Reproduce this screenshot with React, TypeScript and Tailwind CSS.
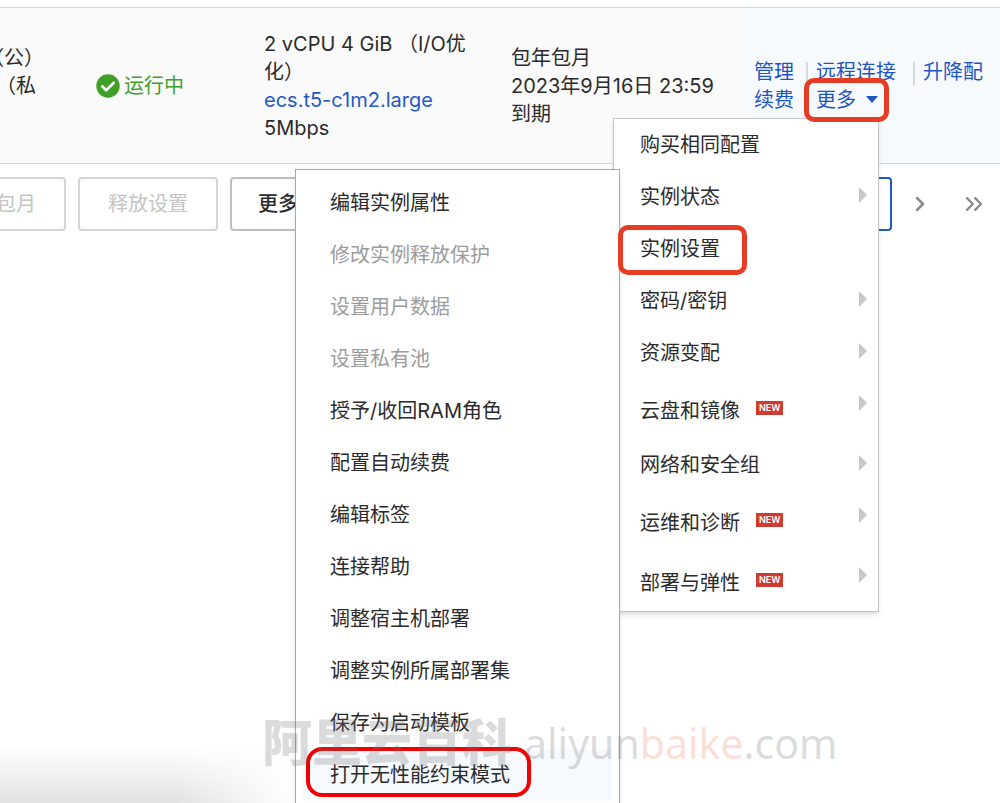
import { ChevronRight, ChevronsRight } from "lucide-react";

type MenuItem = {
   label: string;
   hasChildren?: boolean;
   isNew?: boolean;
   disabled?: boolean;
   active?: boolean;
};

const moreItems: MenuItem[] = [
   { label: "购买相同配置" },
   { label: "实例状态", hasChildren: true },
   { label: "实例设置", active: true },
   { label: "密码/密钥", hasChildren: true },
   { label: "资源变配", hasChildren: true },
   { label: "云盘和镜像", hasChildren: true, isNew: true },
   { label: "网络和安全组", hasChildren: true },
   { label: "运维和诊断", hasChildren: true, isNew: true },
   { label: "部署与弹性", hasChildren: true, isNew: true },
];

const settingItems: MenuItem[] = [
   { label: "编辑实例属性" },
   { label: "修改实例释放保护", disabled: true },
   { label: "设置用户数据", disabled: true },
   { label: "设置私有池", disabled: true },
   { label: "授予/收回RAM角色" },
   { label: "配置自动续费" },
   { label: "编辑标签" },
   { label: "连接帮助" },
   { label: "调整宿主机部署" },
   { label: "调整实例所属部署集" },
   { label: "保存为启动模板" },
   { label: "打开无性能约束模式", active: true },
];

const Separator = () => <span className="mt-1 h-6 w-0.5 bg-[#d8d8d8]" />;

const InstanceRow = () => (
   <table className="w-full table-fixed border-y border-[#d4d4d4] bg-[#fafafa]">
      <colgroup>
         <col className="w-24" />
         <col className="w-[168px]" />
         <col className="w-[247px]" />
         <col className="w-[235px]" />
         <col />
      </colgroup>
      <tbody>
         <tr className="h-[156px] leading-7">
            {/* IP address */}
            <td className="pb-7">
               <div className="-ml-4">（公）</div>
               <div className="-ml-1">（私</div>
            </td>

            {/* Status */}
            <td className="text-[#41a02a]">
               <span className="flex items-center gap-1">
                  <svg viewBox="0 0 24 24" className="size-6">
                     <circle cx="12" cy="12" r="11.7" fill="#3f9f27" />
                     <path
                        d="M6.2 12.3l4 3.9 7.6-7.5"
                        fill="none"
                        stroke="#fff"
                        strokeWidth="2.6"
                        strokeLinecap="round"
                        strokeLinejoin="round"
                     />
                  </svg>
                  运行中
               </span>
            </td>

            {/* Configuration */}
            <td className="pr-8">
               2 vCPU 4 GiB （I/O优化）
               <a href="#type" className="block text-[#2259c6]">
                  ecs.t5-c1m2.large
               </a>
               5Mbps
            </td>

            {/* Billing */}
            <td className="pr-4">
               包年包月
               <br />
               2023年9月16日 23:59 到期
            </td>

            {/* Actions */}
            <td className="bg-[#f7fafd] pl-2 text-[#1e55c4]">
               <div className="grid grid-cols-[62px_107px_auto] whitespace-nowrap">
                  <div className="flex items-center justify-between pr-2">
                     <a href="#manage">管理</a>
                     <Separator />
                  </div>
                  <div className="flex items-center justify-between pr-2">
                     <a href="#connect">远程连接</a>
                     <Separator />
                  </div>
                  <a href="#resize">升降配</a>
                  <div className="flex items-center justify-between pr-2">
                     <a href="#renew">续费</a>
                     <Separator />
                  </div>
                  <button
                     type="button"
                     className="relative z-30 flex items-center gap-2.5 text-left"
                  >
                     更多
                     <svg viewBox="0 0 12 7" className="h-[7px] w-3">
                        <path d="M0 0h12L6 7z" fill="#1e55c4" />
                     </svg>
                     <span className="absolute -inset-y-2 -left-3 w-[85px] rounded-[10px] border-5 border-[#e63c23]" />
                  </button>
               </div>
            </td>
         </tr>
      </tbody>
   </table>
);

const Toolbar = () => (
   <div className="flex items-center gap-3 pt-[13px]">
      <button
         type="button"
         disabled
         className="-ml-[34px] h-[54px] rounded-sm border-2 border-[#d4d4d4] px-7 text-[#c4c4c4]"
      >
         包月
      </button>
      <button
         type="button"
         disabled
         className="h-[54px] rounded-sm border-2 border-[#d4d4d4] px-7 text-[#c4c4c4]"
      >
         释放设置
      </button>
      <button
         type="button"
         className="h-[54px] rounded-sm border-2 border-[#c0c0c0] px-[26px] font-medium"
      >
         更多
      </button>
      <div className="ml-auto flex items-center text-[#8a8a8a]">
         <button
            type="button"
            className="h-[54px] w-14 rounded-sm border-2 border-[#2259c6] text-[#2259c6]"
         >
            1
         </button>
         <button type="button" aria-label="下一页" className="px-4">
            <ChevronRight className="size-6" strokeWidth={2.5} />
         </button>
         <button type="button" aria-label="最后一页" className="px-3">
            <ChevronsRight className="size-7" />
         </button>
      </div>
   </div>
);

const MoreMenu = () => (
   <ul className="absolute top-[118px] left-[613px] w-[266px] border border-[#c4c4c4] bg-white shadow-md">
      {moreItems.map((item) => (
         <li key={item.label}>
            <button
               type="button"
               className={`relative flex w-full gap-4 pl-[26px] text-left ${
                  item.isNew ? "h-15 pt-[18px]" : "h-[52px] pt-3"
               }`}
            >
               {item.label}
               {item.isNew && (
                  <span className="mt-1 h-[14px] bg-[#cf3a31] px-[3px] text-[9px] leading-[14px] font-semibold text-white">
                     NEW
                  </span>
               )}
               {item.hasChildren && (
                  <svg
                     viewBox="0 0 8 16"
                     className="absolute top-4 right-[11px] h-4 w-2"
                  >
                     <path d="M0 0l8 8-8 8z" fill="#c8c8c8" />
                  </svg>
               )}
               {item.active && (
                  <span className="absolute top-0.5 left-1 z-30 h-[50px] w-[129px] rounded-[10px] border-5 border-[#e63c23]" />
               )}
            </button>
         </li>
      ))}
   </ul>
);

const SettingsMenu = () => (
   <ul className="absolute top-[169px] left-[295px] z-20 w-[325px] border border-[#a8a8a8] bg-white px-[7px] pt-[7px] pb-2 shadow-md">
      {settingItems.map((item) => (
         <li key={item.label}>
            <button
               type="button"
               disabled={item.disabled}
               className={`relative h-[52px] w-full pl-[27px] text-left ${
                  item.disabled ? "text-[#9c9c9c]" : ""
               } ${item.active ? "bg-[#f6f9fd]" : ""}`}
            >
               {item.label}
               {item.active && (
                  <span className="absolute -top-0.5 left-[3px] h-[50px] w-[225px] rounded-2xl border-4 border-[#f00000]" />
               )}
            </button>
         </li>
      ))}
   </ul>
);

const Watermark = () => (
   <div className="pointer-events-none absolute top-[709px] left-[262px] z-40 flex items-center gap-3 leading-[68px] whitespace-nowrap text-[#6e7073]/25">
      <span className="text-[50px] font-black">阿里云百科</span>
      <span className="font-['Noto_Sans'] text-[41px]">
         aliyun<span className="text-[#f08060]/25">baike</span>.com
      </span>
   </div>
);

export default function App() {
   return (
      <main className="relative h-screen overflow-hidden bg-white pt-[7px] font-['Inter','Noto_Sans_CJK_SC',sans-serif] text-xl text-[#2b2b2b]">
         <InstanceRow />
         <Toolbar />
         <MoreMenu />
         {/* Shade along the bottom edge */}
         <div className="absolute bottom-0 left-0 h-14 w-[295px] bg-linear-to-b from-white to-[#e2e2e2] mask-r-from-60%" />
         <SettingsMenu />
         <Watermark />
      </main>
   );
}
